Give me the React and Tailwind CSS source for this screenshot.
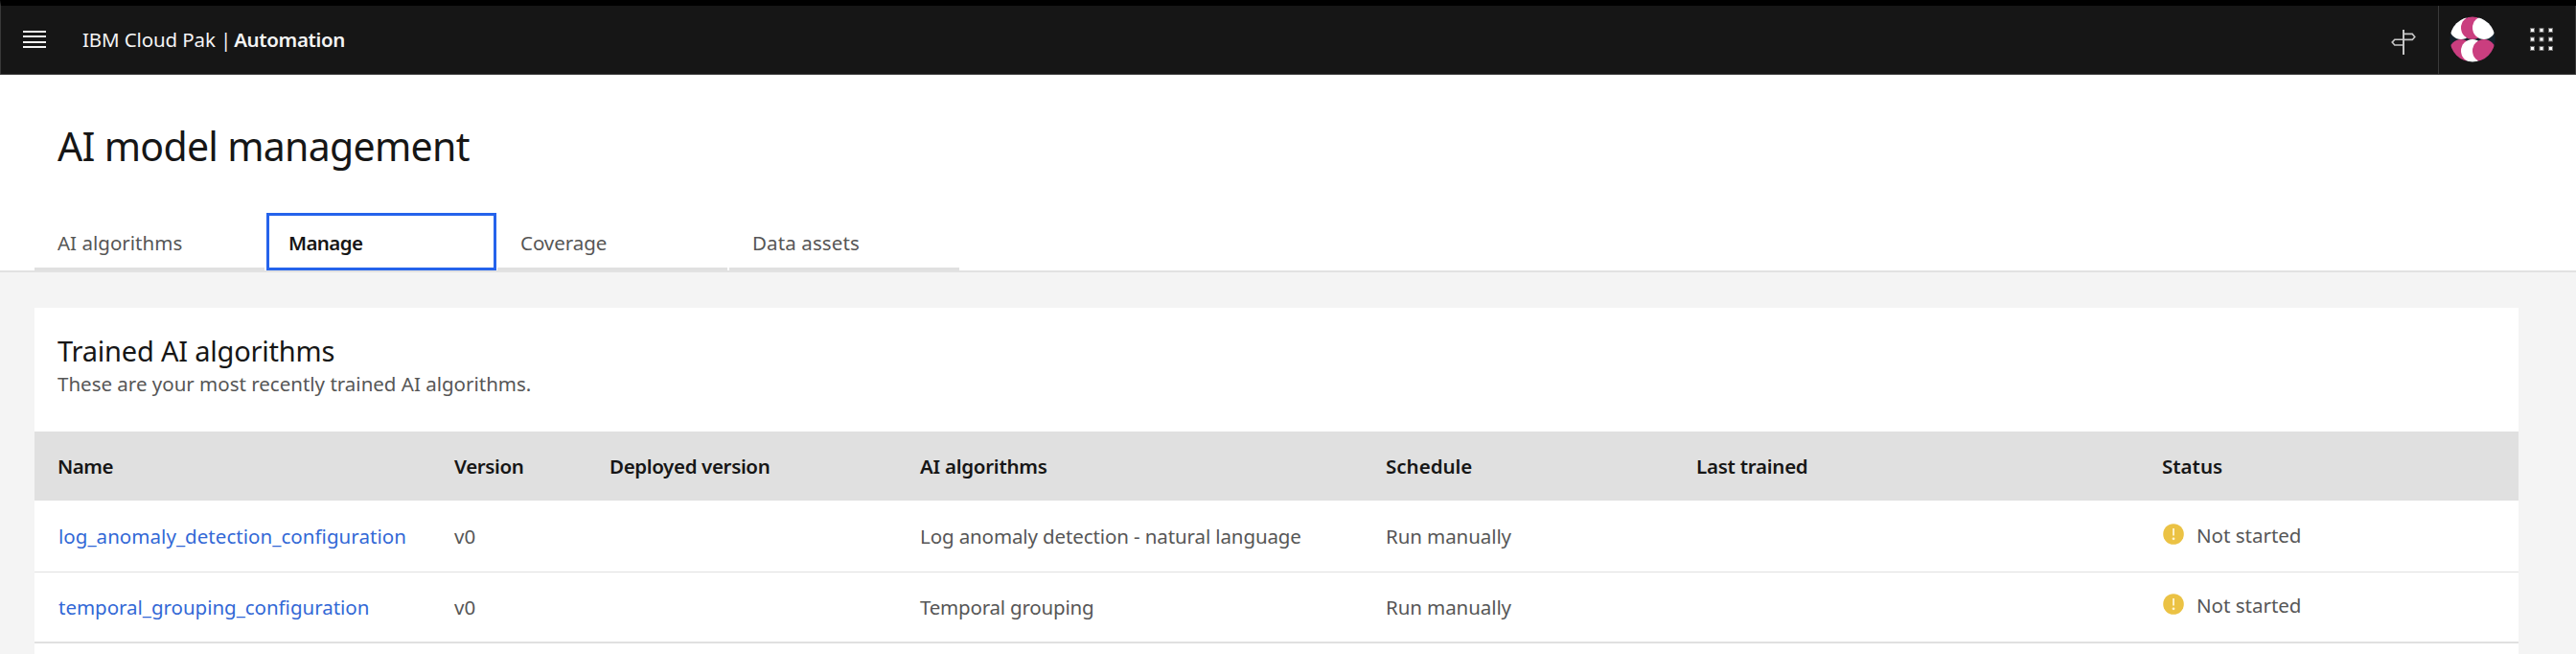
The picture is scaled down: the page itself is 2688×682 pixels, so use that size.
const tabs = [
  { label: "AI algorithms", tracking: "tracking-[0.02px]" },
  { label: "Manage", tracking: "tracking-[-0.6px]", active: true },
  { label: "Coverage", tracking: "tracking-[-0.05px]" },
  { label: "Data assets", tracking: "tracking-[0.12px]" },
];

const columns = [
  { label: "Name", tracking: "tracking-[-0.5px]" },
  { label: "Version", tracking: "tracking-[-0.35px]" },
  { label: "Deployed version", tracking: "tracking-[-0.35px]" },
  { label: "AI algorithms", tracking: "tracking-[-0.25px]" },
  { label: "Schedule", tracking: "tracking-[0px]" },
  { label: "Last trained", tracking: "tracking-[-0.25px]" },
  { label: "Status", tracking: "tracking-[0px]" },
];

const rows = [
  {
    name: "log_anomaly_detection_configuration",
    nameTracking: "tracking-[0.05px]",
    algorithm: "Log anomaly detection - natural language",
    algorithmTracking: "tracking-[-0.11px]",
    border: "h-[75px] border-b",
    statusPadding: "pb-[4px]",
  },
  {
    name: "temporal_grouping_configuration",
    nameTracking: "tracking-[-0.02px]",
    algorithm: "Temporal grouping",
    algorithmTracking: "tracking-[-0.2px]",
    border: "h-[74px] border-b-2",
    statusPadding: "pb-[6px]",
  },
];

const grid = "grid grid-cols-[414px_162px_324px_486px_324px_486px_396px] items-center";

function MenuIcon() {
  return (
    <svg className="h-[18px] w-6" viewBox="0 0 24 18" fill="#f4f4f4" shapeRendering="crispEdges">
      <rect width="24" height="1.6" />
      <rect y="5" width="24" height="2" />
      <rect y="11" width="24" height="2" />
      <rect y="16" width="24" height="2" />
    </svg>
  );
}

function SignpostIcon() {
  return (
    <svg className="h-[26px] w-[26px]" viewBox="0 0 26 26" fill="none" stroke="#c6c6c6" strokeWidth="1.6">
      <path d="M13 0V26" strokeWidth="2" />
      <path d="M13 4.4H22.2L24.8 7.4L22.2 10.4H13" />
      <path d="M13 10.2H3.8L1.2 13.1L3.8 16H13" />
    </svg>
  );
}

function Avatar() {
  return (
    <svg className="h-12 w-12" viewBox="0 0 48 48">
      <defs>
        <clipPath id="avatar">
          <circle cx="24" cy="24" r="23.6" />
        </clipPath>
      </defs>
      <g clipPath="url(#avatar)">
        <rect width="48" height="48" fill="#14202b" />
        <circle cx="12" cy="12" r="12" fill="#fff" />
        <circle cx="24" cy="12" r="12" fill="#ca3e7f" />
        <circle cx="36" cy="12" r="12" fill="#fff" />
        <circle cx="12" cy="36" r="12" fill="#ca3e7f" />
        <circle cx="24" cy="36" r="12" fill="#fff" />
        <circle cx="36" cy="36" r="12" fill="#ca3e7f" />
      </g>
    </svg>
  );
}

function SwitcherIcon() {
  const steps = [0, 9.5, 19];
  return (
    <svg className="h-6 w-6" viewBox="0 0 24 24" fill="#fff" stroke="#6f6f6f" strokeWidth="1">
      {steps.map((y) => steps.map((x) => <rect key={`${x}-${y}`} x={x + 0.5} y={y + 0.5} width="4" height="4" />))}
    </svg>
  );
}

function WarningIcon() {
  return (
    <svg className="h-[22px] w-[22px] shrink-0" viewBox="0 0 22 22">
      <circle cx="11" cy="11" r="10.8" fill="#ebc244" />
      <path d="M11 5V12.6" stroke="#fff6d6" strokeWidth="1.8" />
      <circle cx="11" cy="15.8" r="1.4" fill="#fff6d6" />
    </svg>
  );
}

export default function App() {
  return (
    <div className="flex h-[682px] w-[2688px] flex-col overflow-hidden whitespace-nowrap bg-[#f4f4f4] font-['Noto_Sans',sans-serif] text-[20.5px] leading-8 text-[#565656]">
      <header className="flex h-[78px] shrink-0 items-stretch border-b border-l border-t-[6px] border-b-[#393939] border-l-[#393939] border-t-black bg-[#161616] text-[#f4f4f4]">
        <button className="flex w-[70px] items-center pb-px pl-[23px]">
          <MenuIcon />
        </button>
        <div className="flex flex-1 items-center pb-[2px] pl-[15px]">
          <span className="tracking-[-0.12px]">IBM Cloud Pak |</span>
          <span className="ml-[3px] font-semibold tracking-[-0.35px]">Automation</span>
        </div>
        <button className="flex w-[72px] items-center justify-center pt-[5px]">
          <SignpostIcon />
        </button>
        <button className="flex w-[73px] items-center border-l border-[#393939] pb-px pl-[11px]">
          <Avatar />
        </button>
        <button className="flex w-[71px] items-center border-r border-[#393939] pb-px pl-[23px]">
          <SwitcherIcon />
        </button>
      </header>

      <section className="h-[206px] shrink-0 border-b-2 border-[#e2e2e2] bg-white pt-[50px]">
        <h1 className="pl-[60px] text-[41px] leading-[48px] tracking-[-0.7px] text-[#161616]">AI model management</h1>
        <nav className="mt-[46px] flex pl-9">
          {tabs.map((t) => (
            <div
              key={t.label}
              className={
                t.active
                  ? "mr-px flex h-[60px] w-[240px] items-center border-[3px] border-[#2563eb] pt-[2px] pl-[20px] font-semibold text-[#161616]"
                  : "mr-[2px] flex h-[60px] w-[240px] items-center border-b-[3px] border-[#e0e0e0] pt-[5px] pl-6"
              }
            >
              <span className={t.tracking}>{t.label}</span>
            </div>
          ))}
        </nav>
      </section>

      <main className="mt-[37px] mr-[60px] ml-9 flex-1 bg-white pt-[27px]">
        <div className="h-[102px] pl-6">
          <h2 className="text-[29px] leading-9 tracking-[-0.2px] text-[#161616]">Trained AI algorithms</h2>
          <p>These are your most recently trained AI algorithms.</p>
        </div>
        <div className={`${grid} h-[72px] bg-[#e0e0e0] font-semibold text-[#161616]`}>
          {columns.map((c) => (
            <div key={c.label} className={`pl-6 ${c.tracking}`}>{c.label}</div>
          ))}
        </div>
        {rows.map((r) => (
          <div key={r.name} className={`${grid} ${r.border} border-[#e0e0e0]`}>
            <a className={`pl-[25px] text-[#3268d6] ${r.nameTracking}`}>{r.name}</a>
            <div className="pl-6">v0</div>
            <div />
            <div className={`pl-6 ${r.algorithmTracking}`}>{r.algorithm}</div>
            <div className="pl-6 tracking-[-0.08px]">Run manually</div>
            <div />
            <div className={`flex items-center gap-[13px] pl-[25px] ${r.statusPadding}`}>
              <WarningIcon />
              <span className="pt-[2px]">Not started</span>
            </div>
          </div>
        ))}
      </main>
    </div>
  );
}
